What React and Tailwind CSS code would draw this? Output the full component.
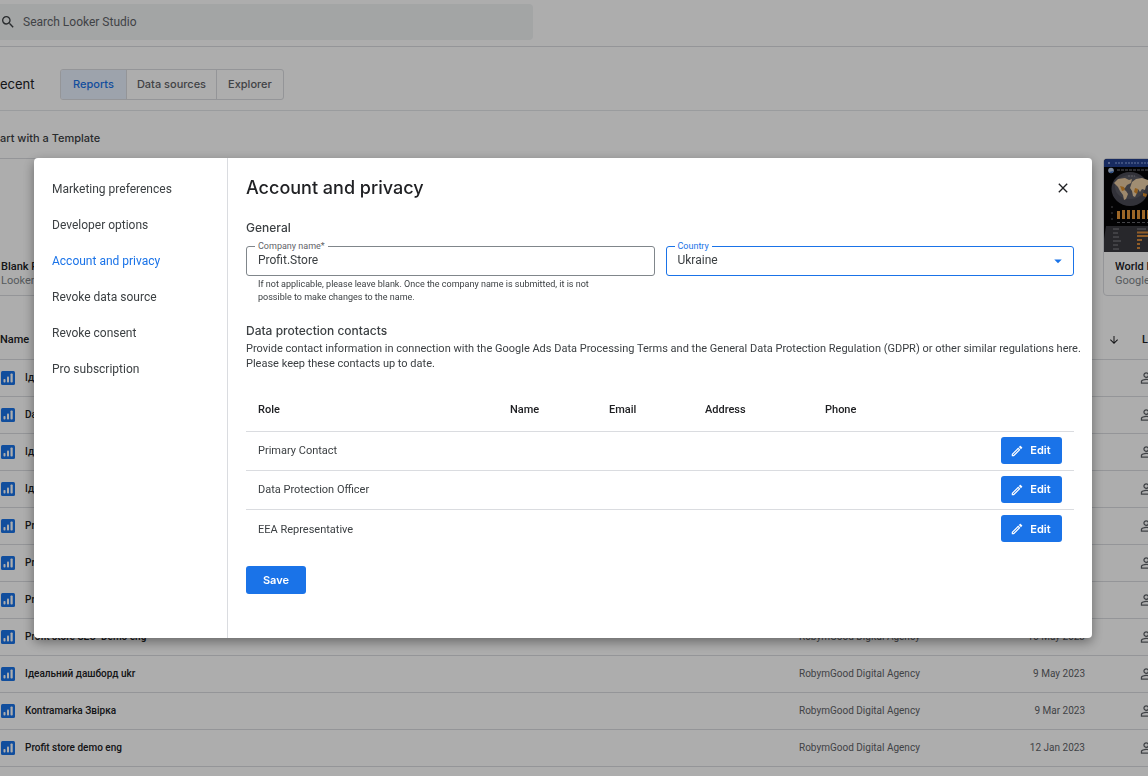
import React from "react";
import {
  MdSearch,
  MdClose,
  MdOutlineEdit,
  MdArrowDropDown,
  MdArrowDownward,
  MdPeopleOutline,
} from "react-icons/md";

const reports = [
  ["Ідеальний дашборд", "25 May 2023"],
  ["Dashboard overview", "24 May 2023"],
  ["Ідеальний дашборд eng", "23 May 2023"],
  ["Ідеальний дашборд SEO", "22 May 2023"],
  ["Profit store PPC", "19 May 2023"],
  ["Profit store SMM", "18 May 2023"],
  ["Profit store demo", "17 May 2023"],
  ["Profit store SEO  Demo eng", "15 May 2023"],
  ["Ідеальний дашборд ukr", "9 May 2023"],
  ["Kontramarka Звірка", "9 Mar 2023"],
  ["Profit store demo eng", "12 Jan 2023"],
];

const menu = [
  "Marketing preferences",
  "Developer options",
  "Account and privacy",
  "Revoke data source",
  "Revoke consent",
  "Pro subscription",
];

const contacts = ["Primary Contact", "Data Protection Officer", "EEA Representative"];

function ReportIcon() {
  return (
    <svg className="block h-[14px] w-[14px]" viewBox="0 0 14 14" aria-hidden="true">
      <rect width="14" height="14" rx="1.5" fill="#1a73e8" />
      <rect x="2.5" y="8" width="2" height="3.5" rx="0.8" fill="#fff" />
      <rect x="6" y="5.5" width="2" height="6" rx="0.8" fill="#fff" />
      <rect x="9.5" y="2.5" width="2.2" height="9" rx="0.8" fill="#fff" />
    </svg>
  );
}

function WorldThumbnail() {
  return (
    <svg className="block h-[93px] w-full" viewBox="0 0 172 93" preserveAspectRatio="xMinYMin slice" aria-hidden="true">
      <rect width="172" height="93" fill="#050507" />
      <rect width="172" height="8" fill="#24408e" />
      <circle cx="5" cy="4" r="1" fill="#9fb2e8" />
      <path d="M11 4h8M21 4h14M37 4h30" stroke="#6f88cc" strokeWidth="1.4" strokeDasharray="2 1" />
      <circle cx="7" cy="11.500" r="2.800" fill="#b9cbe6" />
      <path d="M5 13a3 3 0 0 0 5-1z" fill="#3b6fc4" />
      <path d="M13 11h40" stroke="#55555c" strokeWidth="1.400" strokeDasharray="3 1" />
      <ellipse cx="26" cy="30" rx="18.500" ry="17" fill="#4b4b55" />
      <ellipse cx="26" cy="28" rx="15" ry="12" fill="#5a5a64" />
      <path d="M10 24l4-4 7-1 4 2 3-1-1 4-4 2-2 3-2 1 3 2 2 3-2 5-2 1-1-5-3-4-2-4z" fill="#e8c9a0" />
      <path d="M28 23l4-3 6-1 6 2 1 4-3 2-1 4-3-1-2 3-2-3-1 4-2 4-2-1-1-5-2-3z" fill="#ecd0a8" />
      <path d="M16 27l4 1 1 3-3 1zM31 29l3 1-1 5-3-2zM39 34l4 1-1 3-3-1z" fill="#d98c2b" />
      <path d="M24 17h7" stroke="#8b8b93" strokeWidth="1.200" strokeDasharray="2 1" />
      <path d="M7 48h2M7 54h2M7 60h2" stroke="#66666c" />
      <path d="M14.500 52v8M19.500 51v9M24.500 51v9M29.500 51v9M34.500 51v9M39.500 51v9M44.500 51v9" stroke="#e8993a" strokeWidth="3" />
      <path d="M13 63.500h34" stroke="#66666c" strokeDasharray="3 2" />
      <path d="M2 67h170v26H0V80z" fill="#3a3a40" />
      <path d="M9 70h6M33 70h9M9 74h5M9 78h6M9 82h8M9 86h5M9 90h6" stroke="#85858b" strokeWidth="1" />
      <path d="M33 73.500h15M33 77h12M33 81h5M33 85h3M33 89h3" stroke="#d58a3c" strokeWidth="2" />
    </svg>
  );
}

function TemplateCard({ title, author, first, children }) {
  return (
    <article
      className={
        first
          ? "w-[165px] shrink-0 overflow-hidden rounded-r border border-l-0 border-[#dadce0]"
          : "w-[172px] shrink-0 overflow-hidden rounded border border-[#dadce0]"
      }
    >
      <div className="h-[93px]">{children}</div>
      <div className={first ? "pt-2 pb-[7px] pl-px" : "px-[11px] pt-2 pb-[7px]"}>
        <h3 className="truncate text-[11px] leading-[14px] font-medium text-[#202124]">{title}</h3>
        <p className="truncate text-[11px] leading-[14px] text-[#80868b]">{author}</p>
      </div>
    </article>
  );
}

function Background() {
  return (
    <div className="h-screen overflow-hidden bg-white">
      <header className="h-[47px] border-b border-[#dadce0] pt-1">
        <label className="flex h-9 w-[533px] items-center gap-[7px] rounded-r bg-[#f1f3f4]">
          <MdSearch className="size-4 text-[#3c4043]" />
          <input
            type="search"
            aria-label="Search Looker Studio"
            placeholder="Search Looker Studio"
            className="flex-1 bg-transparent text-xs text-[#3c4043] outline-none placeholder:text-[#5f6368]"
          />
        </label>
      </header>

      <div className="flex h-16 items-center gap-[25px] border-b border-[#e4e6e9] pt-3 pb-px">
        <h1 className="w-[35px] font-[Inter,sans-serif] text-[13px] leading-5 text-[#202124]">
          ecent
        </h1>
        <div className="mt-px flex overflow-hidden rounded-[3px] border border-[#dadce0] font-[Inter,sans-serif] text-[11px] font-medium">
          <button className="h-[29px] bg-[#e8f0fe] px-3 text-[#1a73e8]">Reports</button>
          <button className="border-l border-[#dadce0] px-[10px] text-[#5f6368]">Data sources</button>
          <button className="border-l border-[#dadce0] px-[11px] text-[#5f6368]">Explorer</button>
        </div>
      </div>

      <h2 className="pt-[18px] pb-[11px] font-[Inter,sans-serif] text-[11px] leading-[18px] font-medium text-[#3c4043]">
        art with a Template
      </h2>
      <section className="flex gap-[13px] overflow-hidden">
        <TemplateCard first title="Blank Report" author="Looker Studio" />
        <TemplateCard title="Tutorial Report" author="Looker Studio" />
        <TemplateCard title="Acme Marketing" author="Google Analytics" />
        <TemplateCard title="Search Console Report" author="Search Console" />
        <TemplateCard title="Ecommerce" author="Google Analytics" />
        <TemplateCard title="Google Ads Overview" author="Google Ads" />
        <TemplateCard title="World Population Data" author="Google">
          <WorldThumbnail />
        </TemplateCard>
      </section>

      <table className="mt-[26px] w-[calc(100%+72px)] table-fixed text-left text-[10px]">
        <colgroup>
          <col className="w-[25px]" />
          <col />
          <col className="w-[150px]" />
          <col className="w-[136px]" />
          <col className="w-[55px]" />
          <col className="w-20" />
        </colgroup>
        <thead>
          <tr className="h-[37px] border-b border-[#dadce0] text-[11px] text-[#202124]">
            <th colSpan={2} className="font-medium">Name</th>
            <th className="font-medium">Owned by anyone</th>
            <th className="text-right font-medium">Last modified</th>
            <th className="pl-[23px]">
              <MdArrowDownward className="size-3" />
            </th>
            <th className="pl-0.5 font-medium">Location</th>
          </tr>
        </thead>
        <tbody>
          {reports.map(([name, date]) => (
            <tr key={name} className="h-[37px] border-b border-[#dadce0] text-[#5f6368]">
              <td className="pl-px"><ReportIcon /></td>
              <td className="font-medium whitespace-pre text-[#202124]">{name}</td>
              <td>RobymGood Digital Agency</td>
              <td className="text-right">{date}</td>
              <td />
              <td><MdPeopleOutline className="size-5" /></td>
            </tr>
          ))}
        </tbody>
      </table>
    </div>
  );
}

function SettingsDialog() {
  return (
    <div
      role="dialog"
      aria-modal="true"
      aria-labelledby="dialog-title"
      className="flex w-full rounded bg-white shadow-[0_4px_12px_rgba(0,0,0,0.4)]"
    >
      <nav className="w-[194px] shrink-0 border-r border-[#dadce0] pt-[13px]">
        {menu.map((item) => (
          <a
            key={item}
            href="#"
            className={
              item === "Account and privacy"
                ? "flex h-9 items-center pl-[18px] text-xs text-[#1a73e8]"
                : "flex h-9 items-center pl-[18px] text-xs text-[#3c4043]"
            }
          >
            {item}
          </a>
        ))}
      </nav>

      <main className="min-w-0 flex-1 pt-[18px] pr-[18px] pb-11 pl-[18px]">
        <div className="flex h-6 items-center justify-between">
          <h2 id="dialog-title" className="font-[Inter,sans-serif] text-lg leading-6 font-medium text-[#202124]">
            Account and privacy
          </h2>
          <button aria-label="Close" className="pr-[3px] text-[#202124]">
            <MdClose className="size-4" />
          </button>
        </div>

        <h3 className="mt-[18px] font-[Inter,sans-serif] text-xs leading-5 font-medium text-[#3c4043]">General</h3>
        <div className="mt-2 grid grid-cols-2 gap-[11px]">
          <div>
            <div className="relative">
              <label htmlFor="company" className="absolute -top-[6px] left-[9px] bg-white px-[3px] text-[9px] leading-3 text-[#5f6368]">
                Company name*
              </label>
              <input
                id="company"
                defaultValue="Profit.Store"
                className="block h-[30px] w-full rounded-[3px] border border-[#80868b] px-[11px] pb-0.5 text-xs text-[#3c4043] outline-none"
              />
            </div>
            <p className="mt-0.5 max-w-[370px] pl-3 text-[9px] leading-[13px] text-[#3c4043]">
              If not applicable, please leave blank. Once the company name is submitted, it is not possible to make
              changes to the name.
            </p>
          </div>
          <div className="relative">
            <label htmlFor="country" className="absolute -top-[6px] left-[9px] bg-white px-[3px] text-[9px] leading-3 text-[#1a73e8]">
              Country
            </label>
            <select
              id="country"
              className="block h-[30px] w-full appearance-none rounded-[3px] border border-[#1a73e8] bg-white px-[11px] pb-0.5 text-xs text-[#3c4043] outline-none"
            >
              <option>Ukraine</option>
            </select>
            <MdArrowDropDown className="pointer-events-none absolute top-[6px] right-[7px] size-[18px] text-[#1a73e8]" />
          </div>
        </div>

        <h3 className="mt-[17px] font-[Inter,sans-serif] text-xs leading-5 font-medium text-[#3c4043]">
          Data protection contacts
        </h3>
        <p className="-mr-3 text-[11px] leading-[15px] text-[#3c4043]">
          Provide contact information in connection with the Google Ads Data Processing Terms and the General Data
          Protection Regulation (GDPR) or other similar regulations here. Please keep these contacts up to date.
        </p>

        <table className="mt-[17px] w-full table-fixed text-left text-[11px] text-[#3c4043]">
          <colgroup>
            <col className="w-[252px]" />
            <col className="w-[99px]" />
            <col className="w-[96px]" />
            <col className="w-[120px]" />
            <col />
            <col className="w-[85px]" />
          </colgroup>
          <thead>
            <tr className="h-[43px] border-b border-[#dadce0] text-[#202124]">
              <th className="pt-0.5 pl-3 font-medium">Role</th>
              <th className="pt-0.5 pl-3 font-medium">Name</th>
              <th className="pt-0.5 pl-3 font-medium">Email</th>
              <th className="pt-0.5 pl-3 font-medium">Address</th>
              <th className="pt-0.5 pl-3 font-medium">Phone</th>
              <th aria-label="Actions" />
            </tr>
          </thead>
          <tbody>
            {contacts.map((role) => (
              <tr key={role} className="h-[39px] border-b border-[#dadce0] last:border-b-0">
                <td className="pt-0.5 pl-3" colSpan={5}>{role}</td>
                <td className="pr-3">
                  <button className="ml-auto flex h-[27px] w-[61px] items-center justify-center gap-1.5 rounded-[3px] bg-[#1a73e8] pr-0.5 font-[Inter,sans-serif] text-[11px] font-semibold text-white">
                    <MdOutlineEdit className="size-[14px]" />
                    Edit
                  </button>
                </td>
              </tr>
            ))}
          </tbody>
        </table>

        <button className="mt-[18px] block h-7 w-[60px] rounded-[3px] bg-[#1a73e8] font-[Inter,sans-serif] text-[11px] font-semibold text-white">
          Save
        </button>
      </main>
    </div>
  );
}

export default function App() {
  return (
    <div className="font-[Roboto,sans-serif]">
      <Background />
      <div className="fixed inset-0 flex items-start overflow-auto bg-black/32 pt-[158px] pr-14 pl-[34px]">
        <SettingsDialog />
      </div>
    </div>
  );
}
